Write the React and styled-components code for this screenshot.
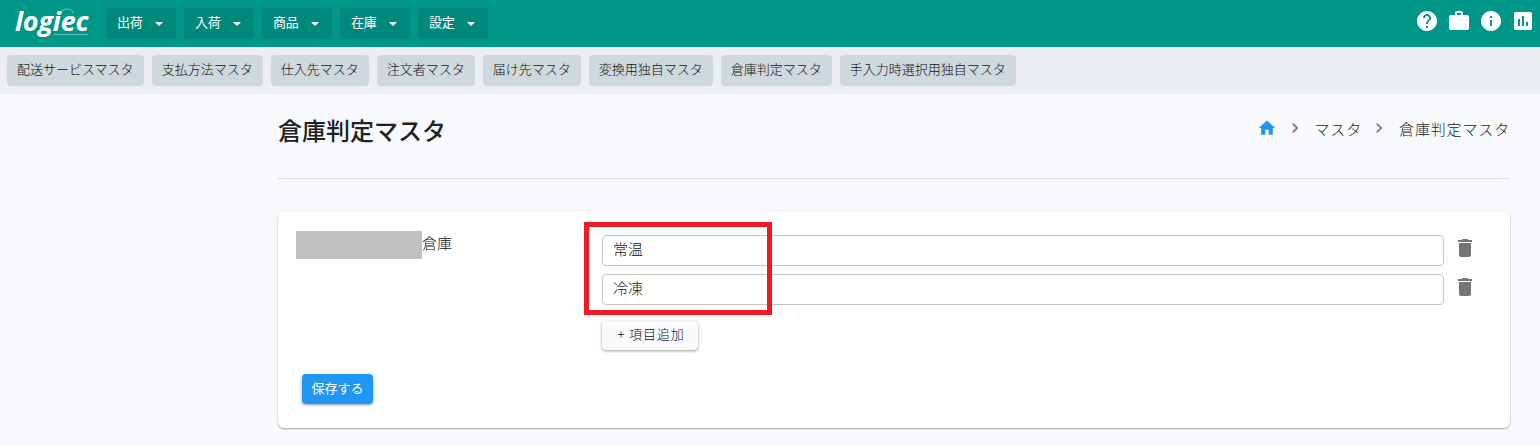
import React from "react";
import styled, { createGlobalStyle } from "styled-components";

const Global = createGlobalStyle`
  html, body { margin: 0; padding: 0; background: #f8f9fd; }
  body { font-family: "Noto Sans CJK JP", Roboto, sans-serif; font-weight: 300; color: #111; }
  * { box-sizing: border-box; }
`;
const Page = styled.div`width: 1540px; height: 446px; overflow: hidden; background: #f8f9fd;`;
const Header = styled.header`
  height: 47px; background: #009688; display: flex; align-items: flex-start;
  padding: 8px 0 0 16px;
`;
const LogoWrap = styled.div`position: relative; width: 90px; height: 31px; flex: none;`;
const LogoText = styled.span`
  position: absolute; left: -1px; top: -2px; font: italic 700 27px/30px "Open Sans", sans-serif;
  color: #fff; letter-spacing: -0.2px;
`;
const LogoTag = styled.span`
  position: absolute; left: 38px; top: 26px; width: 34px; height: 1px; background: rgba(255,255,255,.4);
`;
const LogoArc = styled.svg`position: absolute; left: 43px; top: 0;`;
const NavGroup = styled.nav`display: flex; gap: 8px;`;
const NavButton = styled.div`
  width: 70px; height: 31px; border-radius: 4px; background: #00897b; color: #fff; font-size: 13px; font-weight: 400;
  display: flex; align-items: center; padding: 0 0 0 11px;
`;
const NavLabel = styled.span`position: relative; top: -2px; letter-spacing: -.2px;`;
const Caret = styled.span`
  margin-left: 12px; width: 0; height: 0; border-left: 4px solid transparent; border-right: 4px solid transparent; border-top: 4px solid #fff;
`;
const HeaderIcons = styled.div`margin: 1px 5px 0 auto; display: flex; gap: 8px; color: #fff;`;
const Icon = styled.svg`display: block; fill: currentColor; flex: none;`;
const SubBar = styled.div`height: 47px; background: #eceff1; display: flex; gap: 8px; padding: 8px 7px;`;
const SubButton = styled.div`
  height: 31px; padding: 0 10px 5px; border-radius: 4px; background: #cfd8dc; color: #111; font-size: 13px;
  display: flex; align-items: center; white-space: nowrap;
`;
const Main = styled.main`margin: 0 30px 0 278px;`;
const TitleRow = styled.div`
  height: 85px; border-bottom: 1px solid #dcdcdc; display: flex; justify-content: space-between; padding-top: 20px;
`;
const Title = styled.h1`margin: -1px 0 0; font-size: 24px; line-height: 34px; font-weight: 500; color: #212121;`;
const Crumbs = styled.div`
  display: flex; align-items: center; height: 28px; font-size: 15px; letter-spacing: .85px; color: #1c1c1c;
`;
const CrumbHome = styled.span`color: #2196f3; display: flex; margin-right: 8px;`;
const CrumbSep = styled.span`color: #757575; display: flex; margin-right: ${p => p.$gap}px;`;
const CrumbText = styled.span`margin-right: ${p => p.$gap || 0}px;`;
const Card = styled.section`
  margin-top: 32px; height: 217px; background: #fff; border-radius: 6px; position: relative;
  box-shadow: 0 1px 2px rgba(0,0,0,.35); padding: 20px 18px 0 18px;
`;
const FormRow = styled.div`display: grid; grid-template-columns: 306px 1fr;`;
const Label = styled.div`font-size: 15px; line-height: 24px; height: 28px; padding-left: 126px; color: #111; position: relative;`;
const Masked = styled.span`position: absolute; left: 0; top: 0; width: 126px; height: 28px; background: #c1c1c1;`;
const Fields = styled.div`display: flex; flex-direction: column; gap: 8px; padding-top: 4px;`;
const FieldRow = styled.div`display: flex; align-items: center; gap: 9px;`;
const Input = styled.div`
  width: 842px; height: 31px; border: 1px solid #c4c4c4; border-radius: 4px; background: #fff;
  padding: 0 10px; font-size: 15px; line-height: 25px; color: #222;
`;
const Trash = styled.span`color: #757575; display: flex; margin-top: -6px;`;
const AddButton = styled.div`
  width: 96px; height: 29px; margin-top: 8px; border-radius: 4px; background: #fafafa; font-size: 13px; letter-spacing: .9px;
  display: flex; align-items: center; justify-content: center; color: #111; padding: 0 0 4px 2px;
  box-shadow: 0 1px 3px rgba(0,0,0,.4);
`;
const SaveButton = styled.div`
  width: 71px; height: 30px; margin: 24px 0 0 6px; border-radius: 4px; background: #2196f3; color: #fff; font-size: 13px; font-weight: 400; padding-bottom: 4px;
  display: flex; align-items: center; justify-content: center; box-shadow: 0 1px 3px rgba(0,0,0,.4);
`;
const RedBox = styled.div`
  position: absolute; left: 306px; top: 11px; width: 188px; height: 93px; border: 5px solid #ed1c24; pointer-events: none;
`;

const P = {
  home: "M10 20v-6h4v6h5v-8h3L12 3 2 12h3v8z",
  chev: "M10 6L8.59 7.41 13.17 12l-4.58 4.59L10 18l6-6z",
  help: "M12 2C6.48 2 2 6.48 2 12s4.48 10 10 10 10-4.48 10-10S17.52 2 12 2zm1 17h-2v-2h2v2zm2.07-7.75l-.9.92C13.45 12.9 13 13.5 13 15h-2v-.5c0-1.1.45-2.1 1.17-2.83l1.24-1.26c.37-.36.59-.86.59-1.41 0-1.1-.9-2-2-2s-2 .9-2 2H8c0-2.21 1.79-4 4-4s4 1.79 4 4c0 .88-.36 1.68-.93 2.25z",
  work: "M20 6h-4V4c0-1.11-.89-2-2-2h-4c-1.11 0-2 .89-2 2v2H4c-1.11 0-1.99.89-1.99 2L2 19c0 1.11.89 2 2 2h16c1.11 0 2-.89 2-2V8c0-1.11-.89-2-2-2zm-6 0h-4V4h4v2z",
  info: "M12 2C6.48 2 2 6.48 2 12s4.48 10 10 10 10-4.48 10-10S17.52 2 12 2zm1 15h-2v-6h2v6zm0-8h-2V7h2v2z",
  chart: "M19 3H5c-1.1 0-2 .9-2 2v14c0 1.1.9 2 2 2h14c1.1 0 2-.9 2-2V5c0-1.1-.9-2-2-2zM9 17H7v-7h2v7zm4 0h-2V7h2v10zm4 0h-2v-4h2v4z",
  del: "M6 19c0 1.1.9 2 2 2h8c1.1 0 2-.9 2-2V7H6v12zM19 4h-3.5l-1-1h-5l-1 1H5v2h14V4z",
};
const Ico = ({ d, size = 24 }) => (
  <Icon width={size} height={size} viewBox="0 0 24 24"><path d={d} /></Icon>
);

const nav = ["出荷", "入荷", "商品", "在庫", "設定"];
const sub = ["配送サービスマスタ", "支払方法マスタ", "仕入先マスタ", "注文者マスタ", "届け先マスタ", "変換用独自マスタ", "倉庫判定マスタ", "手入力時選択用独自マスタ"];

export default function App() {
  return (
    <Page>
      <Global />
      <Header>
        <LogoWrap>
          <LogoArc width="16" height="6" viewBox="0 0 16 6"><path d="M2 5a6 4 0 0 1 12 0" fill="none" stroke="#fff" strokeOpacity=".7" strokeDasharray="1.5 1" /></LogoArc>
          <LogoText>logiec</LogoText>
          <LogoTag />
        </LogoWrap>
        <NavGroup>
          {nav.map(n => <NavButton key={n}><NavLabel>{n}</NavLabel><Caret /></NavButton>)}
        </NavGroup>
        <HeaderIcons>
          {[P.help, P.work, P.info, P.chart].map(d => <Ico key={d} d={d} />)}
        </HeaderIcons>
      </Header>
      <SubBar>{sub.map(s => <SubButton key={s}>{s}</SubButton>)}</SubBar>
      <Main>
        <TitleRow>
          <Title>倉庫判定マスタ</Title>
          <Crumbs>
            <CrumbHome><Ico d={P.home} size={20} /></CrumbHome>
            <CrumbSep $gap={9}><Ico d={P.chev} size={20} /></CrumbSep>
            <CrumbText $gap={7}>マスタ</CrumbText>
            <CrumbSep $gap={10}><Ico d={P.chev} size={20} /></CrumbSep>
            <CrumbText>倉庫判定マスタ</CrumbText>
          </Crumbs>
        </TitleRow>
        <Card>
          <FormRow>
            <Label><Masked />倉庫</Label>
            <Fields>
              <FieldRow><Input>常温</Input><Trash><Ico d={P.del} /></Trash></FieldRow>
              <FieldRow><Input>冷凍</Input><Trash><Ico d={P.del} /></Trash></FieldRow>
              <AddButton>+ 項目追加</AddButton>
            </Fields>
          </FormRow>
          <SaveButton>保存する</SaveButton>
          <RedBox />
        </Card>
      </Main>
    </Page>
  );
}
